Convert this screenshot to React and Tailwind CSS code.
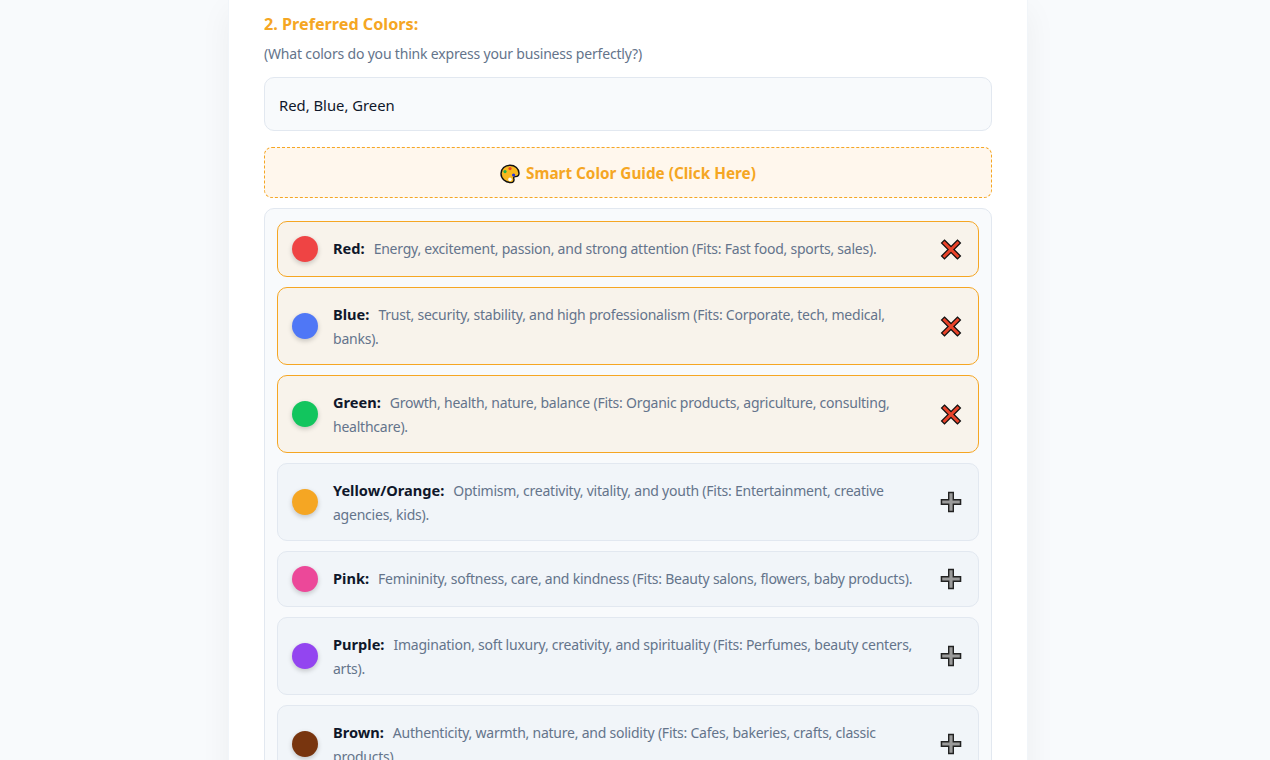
import React from 'react';

const colors = [
  { name: 'Red', hex: 'bg-[#ef4444]', text: 'Energy, excitement, passion, and strong attention (Fits: Fast food, sports, sales).', selected: true },
  { name: 'Blue', hex: 'bg-[#4f77f6]', text: 'Trust, security, stability, and high professionalism (Fits: Corporate, tech, medical, banks).', selected: true },
  { name: 'Green', hex: 'bg-[#12c55e]', text: 'Growth, health, nature, balance (Fits: Organic products, agriculture, consulting, healthcare).', selected: true },
  { name: 'Yellow/Orange', hex: 'bg-[#f5a623]', text: 'Optimism, creativity, vitality, and youth (Fits: Entertainment, creative agencies, kids).' },
  { name: 'Pink', hex: 'bg-[#ec4899]', text: 'Femininity, softness, care, and kindness (Fits: Beauty salons, flowers, baby products).' },
  { name: 'Purple', hex: 'bg-[#9345f0]', text: 'Imagination, soft luxury, creativity, and spirituality (Fits: Perfumes, beauty centers, arts).' },
  { name: 'Brown', hex: 'bg-[#78350f]', text: 'Authenticity, warmth, nature, and solidity (Fits: Cafes, bakeries, crafts, classic products).' },
];

function CrossIcon() {
  return (
    <svg width="22" height="22" viewBox="0 -0.5 22 22" className="shrink-0">
      <path d="M4.5 4.5 L17.5 17.5 M17.5 4.5 L4.5 17.5" stroke="#111" strokeWidth="5.4" strokeLinecap="square" />
      <path d="M4.5 4.5 L17.5 17.5 M17.5 4.5 L4.5 17.5" stroke="#e8432a" strokeWidth="3" strokeLinecap="square" />
    </svg>
  );
}

function PlusIcon() {
  return (
    <svg width="22" height="22" viewBox="0 0 22 22" className="shrink-0">
      <path d="M11 0.7 V21.3 M0.7 11 H21.3" stroke="#222" strokeWidth="6" />
      <path d="M11 2.2 V19.8 M2.2 11 H19.8" stroke="#9a9a9a" strokeWidth="3.2" />
    </svg>
  );
}

function Palette() {
  return (
    <svg width="20" height="20" viewBox="0 0 20 20" className="shrink-0">
      <path d="M10 1.2 C15 1.2 19 4.6 19 9.2 C19 12 17 12.6 15.4 12.6 C14 12.6 13.4 13.4 13.8 14.6 C14.4 16.4 13.6 18.6 11 18.6 C5.4 18.6 1 14.8 1 9.6 C1 4.8 5 1.2 10 1.2 Z" fill="#f8b81f" stroke="#111" strokeWidth="1.4" />
      <circle cx="5" cy="7.6" r="1.6" fill="#22b14c" />
      <circle cx="10" cy="4.6" r="1.6" fill="#e8432a" />
      <circle cx="13.6" cy="11" r="1.6" fill="#2233dd" />
      <circle cx="10" cy="15.4" r="1.8" fill="#fff" />
    </svg>
  );
}

function ColorRow({ color }) {
  return (
    <div className={`flex items-center gap-[15px] rounded-[10px] border py-[14px] pl-[14px] pr-[16px] ${color.selected ? 'border-[#f5a623] bg-[#f8f3eb]' : 'border-[#e2e8f0] bg-[#f1f5f9]'}`}>
      <span className={`h-[26px] w-[26px] shrink-0 rounded-full shadow-[0_2px_5px_rgba(0,0,0,0.2)] ${color.hex}`}></span>
      <p className="-mb-[1px] flex-1 self-start pt-[1px] text-[14px] leading-[24px] tracking-[-0.23px] text-[#64748b]">
        <strong className="mr-[9px] text-[14.6px] leading-[20px] font-bold tracking-normal text-[#0f172a]">{color.name}:</strong>
        {color.text}
      </p>
      {color.selected ? <CrossIcon /> : <PlusIcon />}
    </div>
  );
}

export default function App() {
  return (
    <div className="flex h-[760px] justify-center overflow-hidden bg-[#f8fafc] pr-[14px] font-['Noto_Sans','Open_Sans',sans-serif]">
      <div className="h-fit w-[800px] border-x border-[#f1f5f9] bg-white px-[35px] pt-[12px] shadow-[0_10px_30px_rgba(0,0,0,0.05)]">
        <h3 className="text-[16.2px] leading-[24px] font-bold text-[#f5a623]">2. Preferred Colors:</h3>
        <p className="mt-[8px] text-[14px] leading-[20px] tracking-[-0.18px] text-[#64748b]">(What colors do you think express your business perfectly?)</p>
        <input
          readOnly
          value="Red, Blue, Green"
          className="mt-[13px] block h-[54px] w-full rounded-[10px] border border-[#e2e8f0] bg-[#f8fafc] px-[14px] pt-[2px] text-[14.8px] text-[#0f172a] outline-none"
        />
        <button className="mt-[16px] flex h-[51px] w-full items-center justify-center gap-[6px] rounded-[8px] border border-dashed border-[#f5a623] bg-[#fff7ed] pt-[2px] text-[15.3px] font-bold text-[#f5a623]">
          <Palette />
          Smart Color Guide (Click Here)
        </button>
        <div className="mt-[10px] flex flex-col gap-[10px] rounded-[10px] border border-[#e2e8f0] bg-[#f8fafc] p-[12px]">
          {colors.map((color) => (
            <ColorRow key={color.name} color={color} />
          ))}
        </div>
      </div>
    </div>
  );
}
